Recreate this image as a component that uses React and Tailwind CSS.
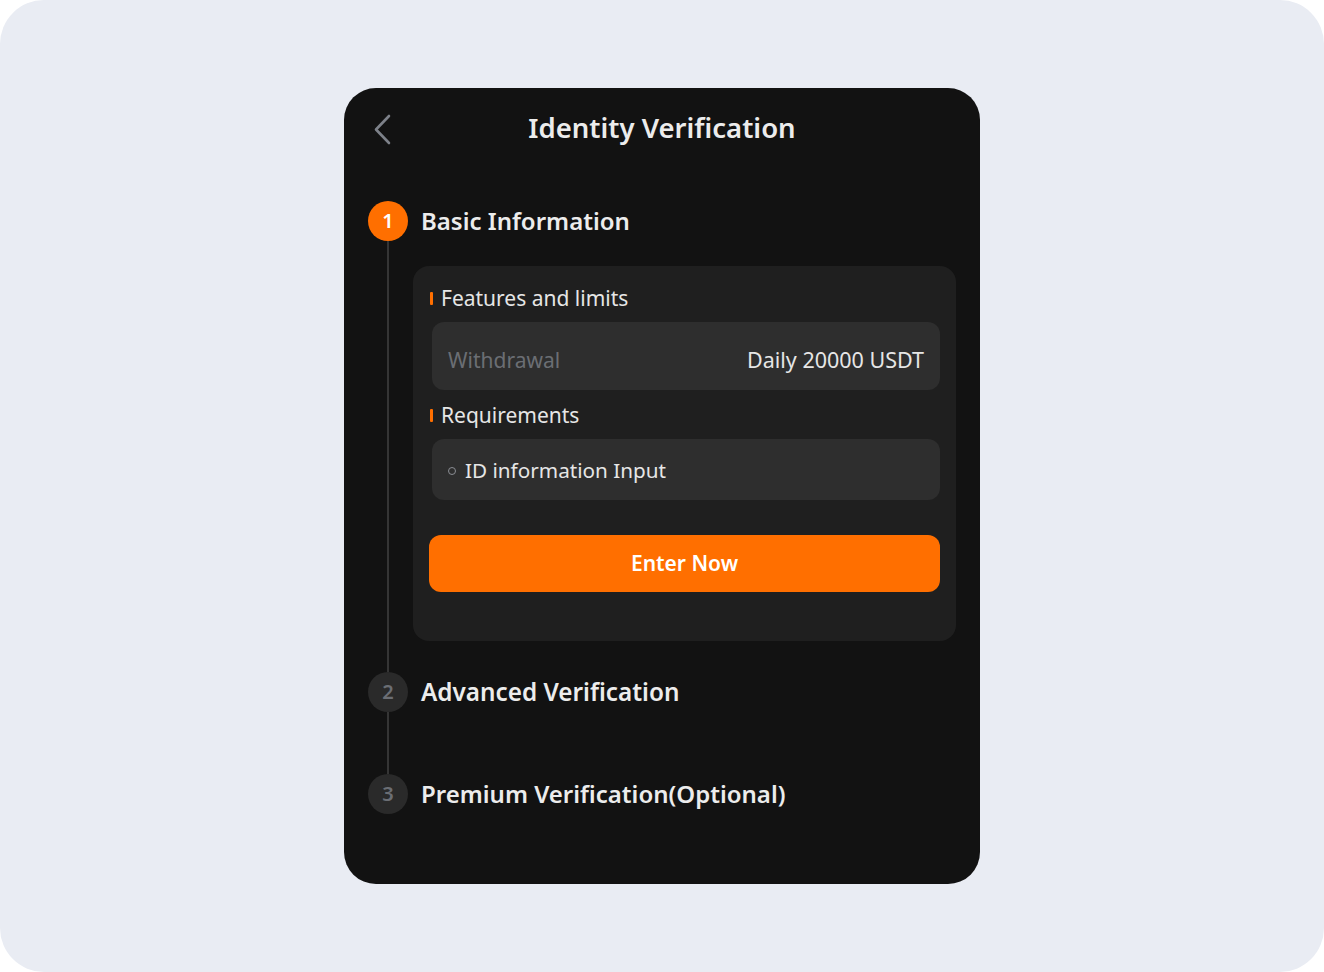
import React from "react";

const font = { fontFamily: '"Noto Sans", "Open Sans", sans-serif' };

function Heading({ children }) {
  return (
    <div className="flex h-6 items-center">
      <span className="ml-px h-[13px] w-[3px] rounded-[1px] bg-[#ff6f00]" />
      <span className="ml-[8px] text-[21px] leading-6 text-[#e6e6e6]">{children}</span>
    </div>
  );
}

export default function App() {
  return (
    <div className="min-h-[972px] w-full bg-white" style={font}>
      <div className="flex h-[972px] w-full items-start justify-center rounded-[44px] bg-[#e9ecf3] pt-[88px]">
        <div className="flex w-[636px] flex-col rounded-[32px] bg-[#121212]">
          {/* Header */}
          <div className="relative flex h-[80px] items-center justify-center">
            <svg
              className="absolute left-[28px] top-[26px]"
              width="22"
              height="32"
              viewBox="0 0 22 32"
              fill="none"
            >
              <path d="M17 2 L4 15.5 L17 29" stroke="#7d8189" strokeWidth="2.6" strokeLinecap="round" strokeLinejoin="round" />
            </svg>
            <span className="text-[27.5px] font-semibold text-[#ececec]">Identity Verification</span>
          </div>

          <div className="flex flex-col pl-6 pr-6 pt-[33px] pb-[70px]">
            {/* Step 1 */}
            <div className="flex">
              <div className="flex w-10 flex-col items-center">
                <div className="flex h-10 w-10 items-center justify-center rounded-full bg-[#ff6f00] text-[20px] font-semibold text-white">1</div>
                <div className="w-[2px] flex-1 bg-[#353535]" />
              </div>
              <div className="ml-[5px] flex flex-1 flex-col pb-[31px]">
                <div className="flex h-10 items-center pl-2 text-[24px] font-semibold text-[#ececec]">Basic Information</div>
                <div className="mt-[25px] flex flex-col rounded-[16px] bg-[#1f1f1f] px-4 pt-[20px] pb-[49px]">
                  <Heading>Features and limits</Heading>
                  <div className="ml-[3px] mt-3 flex h-[68px] items-center justify-between rounded-[12px] bg-[#2e2e2e] px-4 pt-[9px]">
                    <span className="text-[21px] text-[#6b6e74]">Withdrawal</span>
                    <span className="text-[21.5px] text-[#e6e6e6]">Daily 20000 USDT</span>
                  </div>
                  <div className="mt-[13px]">
                    <Heading>Requirements</Heading>
                  </div>
                  <div className="ml-[3px] mt-3 flex h-[61px] items-center rounded-[12px] bg-[#2e2e2e] px-4 pt-[3px]">
                    <span className="h-[8px] w-[8px] rounded-full border-[1.5px] border-[#8a8d93]" />
                    <span className="ml-[9px] text-[20.7px] text-[#e6e6e6]">ID information Input</span>
                  </div>
                  <button className="mt-[35px] flex h-[57px] items-center justify-center rounded-[12px] bg-[#ff6f00] text-[21px] font-semibold text-white">
                    Enter Now
                  </button>
                </div>
              </div>
            </div>

            {/* Step 2 */}
            <div className="flex">
              <div className="flex w-10 flex-col items-center">
                <div className="flex h-10 w-10 items-center justify-center rounded-full bg-[#2a2a2a] text-[20px] font-semibold text-[#6b6e74]">2</div>
                <div className="w-[2px] flex-1 bg-[#353535]" />
              </div>
              <div className="ml-[5px] flex flex-1 flex-col pb-[62px]">
                <div className="flex h-10 items-center pl-2 text-[24.3px] font-semibold text-[#ececec]">Advanced Verification</div>
              </div>
            </div>

            {/* Step 3 */}
            <div className="flex">
              <div className="flex w-10 flex-col items-center">
                <div className="flex h-10 w-10 items-center justify-center rounded-full bg-[#2a2a2a] text-[20px] font-semibold text-[#6b6e74]">3</div>
              </div>
              <div className="ml-[5px] flex flex-1 flex-col">
                <div className="flex h-10 items-center pl-2 text-[24px] font-semibold text-[#ececec]">Premium Verification(Optional)</div>
              </div>
            </div>
          </div>
        </div>
      </div>
    </div>
  );
}
